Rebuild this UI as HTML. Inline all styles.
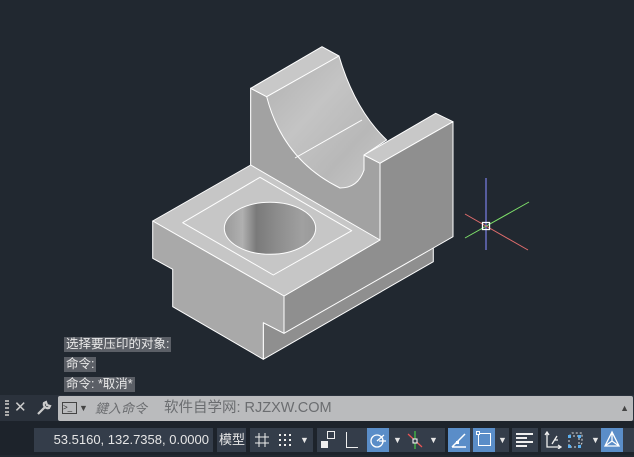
<!DOCTYPE html>
<html><head><meta charset="utf-8">
<style>
*{margin:0;padding:0;box-sizing:border-box}
body{width:634px;height:455px;background:#212830;position:relative;overflow:hidden;font-family:"Liberation Sans","Noto Sans CJK SC",sans-serif}
.hist{position:absolute;left:64px;background:#5b5f66;color:#e8e8e8;font-size:12.5px;line-height:15px;padding:0 2px;height:15px;white-space:nowrap}
.cmd{position:absolute;left:58px;top:396px;width:575px;height:25px;background:#babbbd;border-radius:2px;color:#6b6d70;font-size:14px;line-height:25px;white-space:nowrap}
.sbar{position:absolute;top:421px;left:0;width:634px;height:34px;background:#1d232b}
.g{position:absolute;top:7px;height:24px;background:#343d4a}
.t{color:#e6e6e6;font-size:13px;line-height:24px;position:absolute;white-space:nowrap}
.btn{position:absolute;top:0;height:24px;width:22px}
.on{background:#5a8dc8}
</style></head><body>
<svg width="634" height="400" style="position:absolute;left:0;top:0">
<defs>
<linearGradient id="cyl" x1="0" x2="1"><stop offset="0" stop-color="#9a9a9a"/><stop offset=".2" stop-color="#b0b0b0"/><stop offset=".35" stop-color="#7a7a7a"/><stop offset=".6" stop-color="#8e8e8e"/><stop offset=".85" stop-color="#a0a0a0"/><stop offset="1" stop-color="#9a9a9a"/></linearGradient>
<linearGradient id="arc" x1="0" y1="0" x2="1" y2="1"><stop offset="0" stop-color="#b0b0b0"/><stop offset=".4" stop-color="#c4c4c4"/><stop offset=".7" stop-color="#b8b8b8"/><stop offset="1" stop-color="#c8c8c8"/></linearGradient>
</defs>
<g stroke="#fff" stroke-width="1" stroke-linejoin="round">
<polygon points="250.7,88.3 266.7,96.7 266.7,175 250.7,165" fill="#a6a6a6"/>
<polygon points="266.7,96.7 290,140 340,188 364,170 364,155 380,163 380,240 284,296 250.7,165 250.7,88.3" fill="#a2a2a2"/>
<polygon points="250.7,88.3 322,46.7 339,56 266.7,96.7" fill="#c8c8c8"/>
<path d="M266.7,96.7 L339,56 Q355,110 386.7,140 L364,155 L364,170 Q358,188 340,188 Q283,160 266.7,96.7Z" fill="url(#arc)"/>
<line x1="295" y1="158" x2="362" y2="120"/>
<polygon points="364,155 435.7,113.3 453,121.7 380,163.3" fill="#c8c8c8"/>
<polygon points="380,240 380,163.3 453,121.7 453,236.7 433.3,248 433.3,261.7 263.3,359.3 263.3,322.7 284,333.3 284,296" fill="#8f8f8f"/>
<polygon points="250.7,165 380,240 284,296 152.7,221" fill="#c6c6c6"/>
<polygon points="182.7,222.7 260,177.3 351.7,230.7 273.3,275" fill="none"/>
<ellipse cx="270" cy="228.3" rx="45.7" ry="26" fill="url(#cyl)"/>
<polygon points="152.7,221 284,296 284,333.3 263.3,322.7 263.3,359.3 172.7,306.7 172.7,269.3 152.7,258.3" fill="#a9a9a9"/>
<polyline points="284,333.3 433.3,248" fill="none"/>
</g>
<line x1="486" y1="178" x2="486" y2="250" stroke="#7b7ee6" stroke-width="1.2"/>
<line x1="465" y1="238" x2="529" y2="202" stroke="#7ee06a" stroke-width="1"/>
<line x1="465" y1="214" x2="528" y2="250" stroke="#e26d6d" stroke-width="1"/>
<rect x="482.5" y="222.5" width="7" height="7" fill="none" stroke="#fff" stroke-width="1.3"/>
</svg>
<div class="hist" style="top:337px">选择要压印的对象:</div>
<div class="hist" style="top:357px">命令:</div>
<div class="hist" style="top:377px">命令: *取消*</div>
<div style="position:absolute;left:0;top:395px;width:634px;height:27px;background:#2b323c"></div>
<div style="position:absolute;left:5px;top:400px;width:4px;height:16px;border-left:2px dotted #aaa;border-right:2px dotted #aaa"></div>
<div style="position:absolute;left:14px;top:398px;color:#ccc;font-size:15px">✕</div>
<svg style="position:absolute;left:36px;top:400px" width="16" height="16"><path d="M2 14 L9 7 M8 3 A4 4 0 0 0 13 8 L14 6 L11 5 L10 2 Z" stroke="#ccc" stroke-width="2.2" fill="none"/></svg>
<div class="cmd">
<span style="position:absolute;left:4px;top:6px;width:15px;height:12px;border:1px solid #444;font-size:8px;line-height:9px;color:#333">&gt;_</span>
<span style="position:absolute;left:21px;color:#444;font-size:9px">▼</span>
<span style="position:absolute;left:37px;font-style:italic;font-size:13px">鍵入命令</span>
<span style="position:absolute;left:106px;font-size:14.5px">软件自学网: RJZXW.COM</span>
<span style="position:absolute;right:4px;color:#444;font-size:9px">▲</span>
</div>
<div class="sbar">
<div class="g" style="left:34px;width:179px"><span class="t" style="right:4px;font-size:13px">53.5160, 132.7358, 0.0000</span></div>
<div class="g" style="left:217px;width:29px"><span class="t" style="left:2px;font-size:13px">模型</span></div>
<div class="g" style="left:250px;width:63px">
<svg style="position:absolute;left:4px;top:4px" width="16" height="16"><path d="M5 1V15M11 1V15M1 5H15M1 11H15" stroke="#eee"/></svg>
<svg style="position:absolute;left:27px;top:4px" width="16" height="16" fill="#eee"><rect x="2" y="2" width="2" height="2"/><rect x="7" y="2" width="2" height="2"/><rect x="12" y="2" width="2" height="2"/><rect x="2" y="7" width="2" height="2"/><rect x="7" y="7" width="2" height="2"/><rect x="12" y="7" width="2" height="2"/><rect x="2" y="12" width="2" height="2"/><rect x="7" y="12" width="2" height="2"/><rect x="12" y="12" width="2" height="2"/></svg>
<span class="t" style="left:50px;font-size:9px">▼</span></div>
<div class="g" style="left:317px;width:128px">
<div style="position:absolute;left:4px;top:13px;width:7px;height:7px;background:#eee"></div><div style="position:absolute;left:10px;top:3px;width:8px;height:8px;border:1px solid #eee"></div>
<div style="position:absolute;left:29px;top:4px;width:12px;height:16px;border-left:1px solid #eee;border-bottom:1px solid #eee"></div>
<div class="btn on" style="left:50px"><svg width="22" height="24"><circle cx="10" cy="13" r="6" stroke="#fff" fill="none" stroke-width="1.3"/><path d="M10 13 L17 7 M12 13 H19" stroke="#fff" stroke-width="1.3"/></svg></div>
<span class="t" style="left:76px;font-size:9px">▼</span>
<svg style="position:absolute;left:88px;top:2px" width="20" height="20"><path d="M10 1V19" stroke="#4c4" stroke-width="1.2"/><path d="M3 4 L17 17" stroke="#e55" stroke-width="1.2"/><rect x="8" y="9" width="4" height="4" fill="#343d4a" stroke="#fff"/></svg>
<span class="t" style="left:112px;font-size:9px">▼</span>
</div>
<div class="g" style="left:448px;width:61px">
<div class="btn on" style="left:0"><svg width="22" height="24"><path d="M4 19 H18 M4 19 L17 6" stroke="#fff" stroke-width="1.5"/><rect x="8" y="13" width="3" height="3" fill="#fff"/></svg></div>
<div class="btn on" style="left:25px"><div style="position:absolute;left:5px;top:5px;width:13px;height:13px;border:1px solid #fff"></div><div style="position:absolute;left:3px;top:3px;width:4px;height:4px;border:1px solid #fff;background:#5a8dc8"></div></div>
<span class="t" style="left:50px;font-size:9px">▼</span>
</div>
<div class="g" style="left:512px;width:26px"><svg style="position:absolute;left:4px;top:4px" width="18" height="16" fill="#eee"><rect x="0" y="1" width="17" height="2"/><rect x="0" y="5" width="11" height="2"/><rect x="0" y="9" width="17" height="2"/><rect x="0" y="13" width="11" height="2"/></svg></div>
<div class="g" style="left:541px;width:93px">
<svg style="position:absolute;left:3px;top:3px" width="18" height="18"><path d="M3 1V16H17 M1 4 L3 1 L5 4 M14 14 L17 16 L14 18 M8 13 L13 5 M10 9 L14 9" stroke="#eee" fill="none" stroke-width="1.3"/></svg>
<svg style="position:absolute;left:25px;top:3px" width="18" height="18"><path d="M3 5 H13 V16 H3 Z M3 5 L6 2 H16 V12 L13 16" stroke="#ddd" fill="none" stroke-dasharray="2 2"/><g fill="#5ab0f0"><rect x="2" y="4" width="3" height="3"/><rect x="12" y="4" width="3" height="3"/><rect x="2" y="14" width="3" height="3"/><rect x="12" y="14" width="3" height="3"/></g></svg>
<span class="t" style="left:50px;font-size:9px">▼</span>
<div class="btn on" style="left:60px"><svg width="22" height="24"><path d="M11 4 L4 18 H18 Z M11 4 V13 M4 18 L11 13 L18 18" stroke="#fff" fill="none" stroke-width="1.3"/></svg></div>
</div>
</div>
</body></html>
